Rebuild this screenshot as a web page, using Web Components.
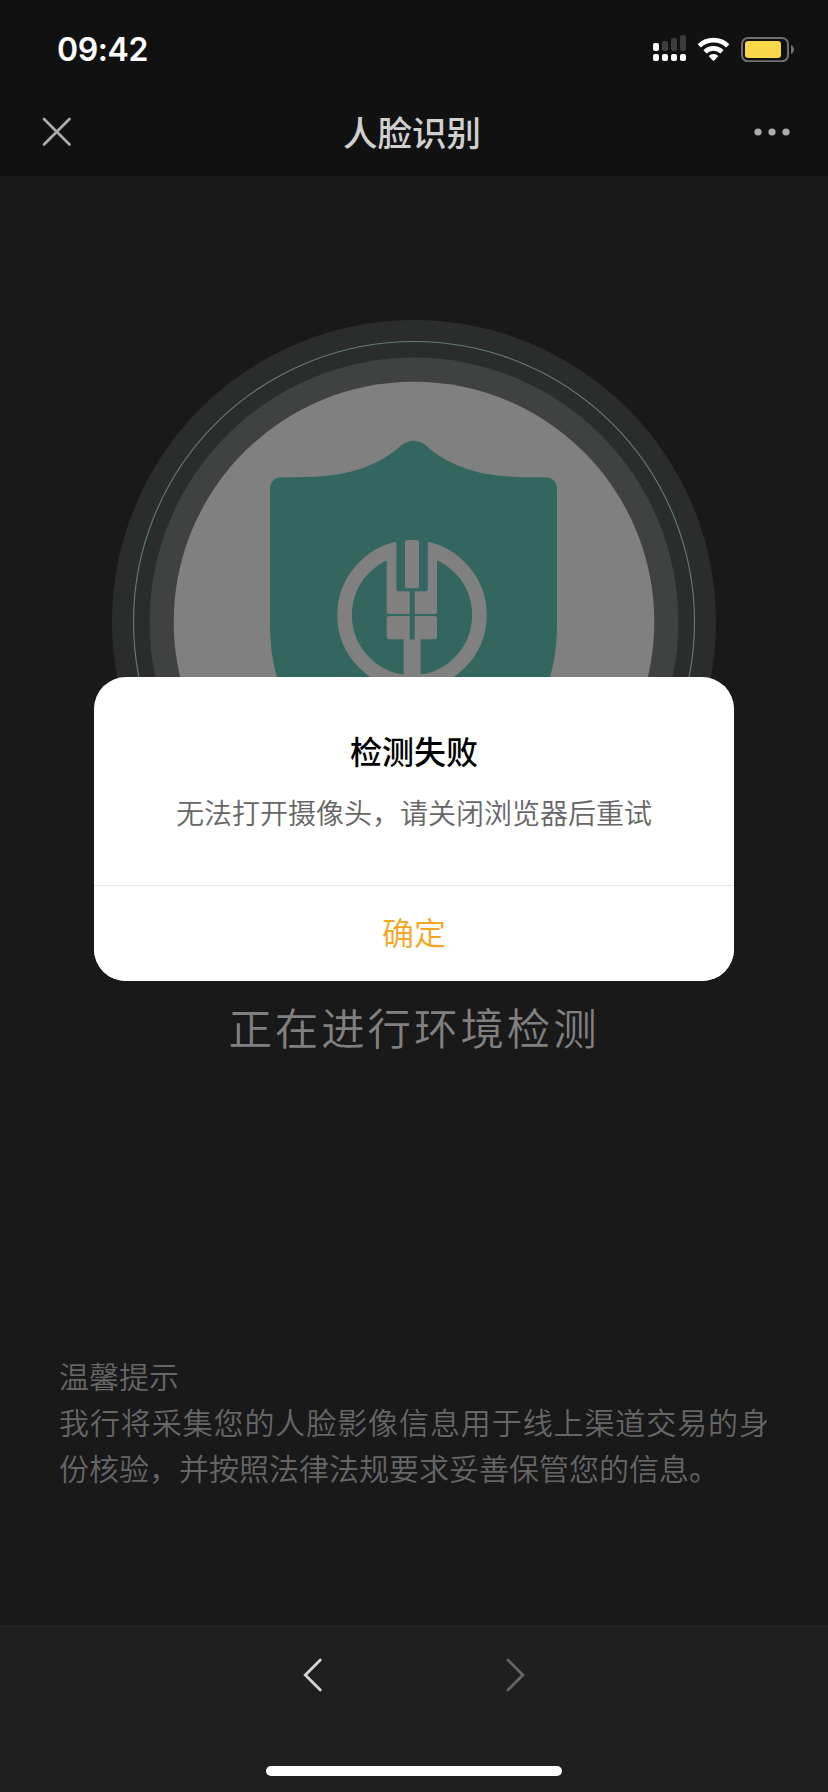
<!DOCTYPE html>
<html lang="zh-CN">
<head>
<meta charset="utf-8">
<title>人脸识别</title>
<style>
html, body { margin: 0; background: #191919; }
body { font-family: "Noto Sans CJK SC", sans-serif; }
</style>
</head>
<body>
<face-app></face-app>
<script>
function define(name, html) {
  const template = document.createElement('template');
  template.innerHTML = html;
  customElements.define(name, class extends HTMLElement {
    constructor() {
      super();
      this.attachShadow({ mode: 'open' }).append(template.content.cloneNode(true));
    }
  });
}

define('status-bar', `
<style>
:host { display: flex; justify-content: space-between; height: 88px; box-sizing: border-box; padding: 30px 34px 0 57px; }
time { font: 600 32px/39px Inter, sans-serif; letter-spacing: -0.4px; color: #fff; }
svg { display: block; }
</style>
<time>09:42</time>
<svg width="142" height="32" viewBox="652 30 142 32">
  <g fill="#fff">
    <rect x="653" y="43" width="6" height="8" rx="2"/>
    <rect x="653" y="54" width="6" height="7" rx="2"/>
    <rect x="662" y="54" width="6" height="7" rx="2"/>
    <rect x="671" y="54" width="6" height="7" rx="2"/>
    <rect x="680" y="54" width="6" height="7" rx="2"/>
  </g>
  <g fill="#3d3d3d">
    <rect x="662" y="41" width="6" height="10" rx="2"/>
    <rect x="671" y="38" width="6" height="13" rx="2"/>
    <rect x="680" y="35" width="6" height="16" rx="2"/>
  </g>
  <g fill="none" stroke="#fff" stroke-width="4.6">
    <path d="M699.3 45.8A20.5 20.5 0 0 1 727.7 45.8"/>
    <path d="M705 51.8A12.3 12.3 0 0 1 722 51.8"/>
  </g>
  <path d="M708.6 56A7 7 0 0 1 718.4 56L714.2 60.5Q713.5 61.1 712.8 60.5Z" fill="#fff"/>
  <rect x="742" y="38" width="46" height="23.2" rx="6" fill="none" stroke="#707070" stroke-width="2"/>
  <rect x="745" y="41" width="36" height="17" rx="3" fill="#f8d749"/>
  <path d="M791 45Q794 46.5 794 49.5T791 54Z" fill="#707070"/>
</svg>`);

define('nav-header', `
<style>
:host { display: grid; grid-template-columns: 60px 1fr 60px; align-items: center; height: 88px; box-sizing: border-box; padding: 0 32px 0 32px; }
h1 { margin: 0 0 3px; font-size: 34.500px; line-height: 50px; font-weight: 500; color: #d0d0d0; text-align: center; position: relative; left: -2px; }
svg { display: block; }
.more { justify-self: end; }
</style>
<svg width="50" height="50" viewBox="32 107 50 50"><path d="M44 119L69.5 144.500M69.500 119L44 144.500" stroke="#acacac" stroke-width="2.700" stroke-linecap="round"/></svg>
<h1><slot></slot></h1>
<svg class="more" width="50" height="50" viewBox="746 107 50 50" fill="#acacac"><circle cx="758" cy="132" r="3.6"/><circle cx="772" cy="132" r="3.6"/><circle cx="786" cy="132" r="3.6"/></svg>`);

define('shield-badge', `
<style>:host { display: block; width: 604px; height: 604px; } svg { display: block; }</style>
<svg width="604" height="604" viewBox="112 320 604 604">
  <circle cx="414" cy="622" r="302" fill="#2b2d2c"/>
  <circle cx="414" cy="622" r="280.500" fill="none" stroke="#657c77" stroke-width="1.100"/>
  <circle cx="414" cy="622" r="264.400" fill="#404241"/>
  <circle cx="414" cy="622" r="240.300" fill="#808080"/>
  <path d="M270 490Q270 477.300 283 477.300C318 477.300 342 476 364 467.500C380 461.500 392 454 401 445.500Q413.500 436 426 445.500C435 454 447 461.500 463 467.500C485 476 509 477.300 544 477.300Q557 477.300 557 490V625C557 725 490 775 413.500 805C337 775 270 725 270 625Z" fill="#32665e"/>
  <circle cx="412" cy="615" r="67.400" fill="none" stroke="#808080" stroke-width="14.600"/>
  <path d="M396.300 536H428V570H396.300Z" fill="#32665e"/>
  <path d="M386.700 556L396.400 546V589Q396.400 591.300 398.500 591.300H425.500Q427.800 591.300 427.800 589V546L437 556V637Q437 639.300 434.700 639.300H420.700V682H403.700V639.300H389Q386.700 639.300 386.700 637Z" fill="#808080"/>
  <path d="M409.700 591H414.700V639.500H409.700ZM386.500 612Q387 614 389.500 614H434.500Q437 614 437.200 612V618Q437 616.100 434.500 616.100H389.500Q387 616.100 386.500 618Z" fill="#32665e"/>
  <rect x="405" y="540" width="14" height="48.300" rx="2" fill="#808080"/>
</svg>`);

define('scan-panel', `
<style>
:host { display: flex; flex-direction: column; align-items: center; height: 1449px; box-sizing: border-box; padding-top: 144px; background: #191919; }
.state { margin-top: 71px; font-size: 43.500px; line-height: 64px; letter-spacing: 2.900px; font-weight: 350; color: #808080; }
</style>
<shield-badge></shield-badge>
<div class="state"><slot></slot></div>
<slot name="tips"></slot>`);

define('tips-note', `
<style>
:host { display: block; width: 710px; margin-top: 293px; font-size: 30px; line-height: 46px; font-weight: 350; color: #666; }
p { margin: 0; text-align: justify; }
</style>
<p><slot name="title"></slot></p>
<p><slot></slot></p>`);

define('alert-dialog', `
<style>
:host { position: absolute; left: 94px; top: 677px; width: 640px; height: 304px; display: flex; flex-direction: column; border-radius: 32px; overflow: hidden; background: #fff; text-align: center; }
.content { flex: 1; padding-top: 50px; }
h2 { margin: 0; font-size: 32px; line-height: 46px; font-weight: 500; color: #000; }
p { margin: 18px 0 0; font-size: 28px; line-height: 42px; font-weight: 350; color: #666; }
button { height: 96px; border: 0; border-top: 1px solid #e5e5e5; padding: 0 0 5px; background: #fff; color: #f5a623; font: 350 32px/46px "Noto Sans CJK SC", sans-serif; }
</style>
<div class="content"><h2><slot name="title"></slot></h2><p><slot></slot></p></div>
<button><slot name="action"></slot></button>`);

define('bottom-bar', `
<style>
:host { display: flex; flex-direction: column; align-items: center; justify-content: space-between; height: 167px; box-sizing: border-box; padding: 29px 0 16px; background: #1f1f1f; border-top: 1px solid #222; }
nav { display: flex; gap: 162px; }
svg { display: block; }
.home { width: 296px; height: 10px; border-radius: 5px; background: #fff; }
</style>
<nav>
  <svg width="40" height="40" viewBox="293 1655 40 40" fill="none" stroke="#d5d5d5" stroke-width="2.800" stroke-linecap="round"><path d="M320.300 1660L305.300 1675L320.300 1690"/></svg>
  <svg width="40" height="40" viewBox="495 1655 40 40" fill="none" stroke="#666" stroke-width="2.800" stroke-linecap="round"><path d="M507.900 1660L522.900 1675L507.900 1690"/></svg>
</nav>
<div class="home"></div>`);

define('face-app', `
<style>
:host { display: block; position: relative; width: 828px; height: 1792px; overflow: hidden; background: #111; }
</style>
<status-bar></status-bar>
<nav-header>人脸识别</nav-header>
<scan-panel>正在进行环境检测
  <tips-note slot="tips"><span slot="title">温馨提示</span>我行将采集您的人脸影像信息用于线上渠道交易的身份核验，并按照法律法规要求妥善保管您的信息。</tips-note>
</scan-panel>
<bottom-bar></bottom-bar>
<alert-dialog><span slot="title">检测失败</span>无法打开摄像头，请关闭浏览器后重试<span slot="action">确定</span></alert-dialog>`);
</script>
</body>
</html>
